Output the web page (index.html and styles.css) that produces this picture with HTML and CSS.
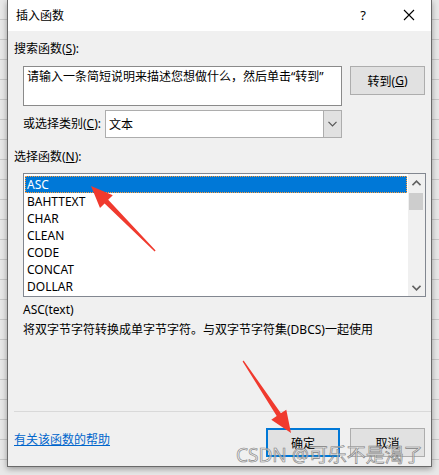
FILE: index.html
```html
<!DOCTYPE html>
<html lang="zh-CN">
<head>
<meta charset="utf-8">
<link rel="stylesheet" href="styles.css">
</head>
<body>
<div class="screen">
  <div class="dialog">
    <div class="titlebar">
      <span class="title">插入函数</span>
      <span class="help">?</span>
      <svg class="close" width="12" height="12" viewBox="0 0 12 12"><path d="M1 1 L11 11 M11 1 L1 11" stroke="#000" stroke-width="1.1" fill="none"/></svg>
    </div>
    <div class="body">
      <div class="label">搜索函数(<u>S</u>):</div>
      <div class="search-row">
        <div class="textarea">请输入一条简短说明来描述您想做什么，然后单击“转到”</div>
        <div class="btn go">转到(<u>G</u>)</div>
      </div>
      <div class="cat-row">
        <span class="cat-label">或选择类别(<u>C</u>):</span>
        <div class="select">
          <span class="sel-text">文本</span>
          <span class="dd"><svg width="9" height="6" viewBox="0 0 9 6"><path d="M0.5 0.8 L4.5 4.8 L8.5 0.8" stroke="#555" stroke-width="1.2" fill="none"/></svg></span>
        </div>
      </div>
      <div class="label label2">选择函数(<u>N</u>):</div>
      <div class="list">
        <div class="items">
          <div class="item selected">ASC</div>
          <div class="item">BAHTTEXT</div>
          <div class="item">CHAR</div>
          <div class="item">CLEAN</div>
          <div class="item">CODE</div>
          <div class="item">CONCAT</div>
          <div class="item">DOLLAR</div>
        </div>
        <div class="scrollbar">
          <div class="sb-btn"><svg width="9" height="6" viewBox="0 0 9 6"><path d="M0.5 5.2 L4.5 1.2 L8.5 5.2" stroke="#606060" stroke-width="1.6" fill="none"/></svg></div>
          <div class="thumb"></div>
          <div class="sb-space"></div>
          <div class="sb-btn"><svg width="9" height="6" viewBox="0 0 9 6"><path d="M0.5 0.8 L4.5 4.8 L8.5 0.8" stroke="#606060" stroke-width="1.6" fill="none"/></svg></div>
        </div>
      </div>
      <div class="sig">ASC(text)</div>
      <div class="desc">将双字节字符转换成单字节字符。与双字节字符集(DBCS)一起使用</div>
      <div class="sep"></div>
      <div class="footer">
        <a class="help-link">有关该函数的帮助</a>
        <div class="btns">
          <div class="btn ok">确定</div>
          <div class="btn cancel">取消</div>
        </div>
      </div>
    </div>
  </div>
  <svg class="arrows" width="439" height="475" viewBox="0 0 439 475">
    <polygon fill="#f03a2e" points="91,186 112.8,195.3 108.2,199.8 155.6,250.6 154.6,251.6 104.6,203.4 100,207.9"/>
    <polygon fill="#f03a2e" points="291,433 286.3,409.7 280.9,413.3 243.6,360.6 242.6,361.4 276.7,416.1 271.3,419.7"/>
  </svg>
  <div class="watermark">CSDN @可乐不是渴了</div>
</div>
</body>
</html>
```
FILE: styles.css
```css
* { box-sizing: border-box; }
html, body { margin: 0; padding: 0; }
body {
  font-family: "Noto Sans", "Noto Sans CJK SC", sans-serif;
  font-size: 12px;
  color: #000;
}
.screen {
  position: relative;
  width: 439px;
  height: 475px;
  overflow: hidden;
  background-color: #e8e8e8;
  background-image:
    repeating-linear-gradient(to bottom, transparent 0, transparent 19px, #c8c8c8 19px, #c8c8c8 20px);
}
.dialog {
  margin-left: 7px;
  width: 425px;
  height: 467px;
  background: #f0f0f0;
  border-left: 1px solid #6a6a6a;
  border-right: 1px solid #6a6a6a;
  border-bottom: 1px solid #6a6a6a;
  box-shadow: 0 2px 6px rgba(0,0,0,0.35);
  display: flex;
  flex-direction: column;
}
.titlebar {
  height: 31px;
  background: #fff;
  display: flex;
  align-items: center;
  padding-left: 8px;
}
.title { font-size: 12px; margin-top: -1px; }
.help { margin-left: auto; margin-right: 37px; font-size: 13px; margin-top: -1px; }
.close { margin-right: 16px; margin-top: -1px; }
.body {
  padding: 0 6px 0 6px;
  display: flex;
  flex-direction: column;
}
.label { line-height: 16px; margin-top: 10px; }
.label2 { margin-top: 11px; }
.search-row {
  display: flex;
  align-items: flex-start;
  margin-top: 9px;
  margin-left: 9px;
}
.textarea {
  width: 319px;
  height: 40px;
  flex-shrink: 0;
  background: #fff;
  border: 1px solid #8a8a8a;
  padding: 2px 3px;
  line-height: 16px;
}
.btn {
  background: #e1e1e1;
  border: 1px solid #adadad;
  display: flex;
  align-items: center;
  justify-content: center;
  height: 29px;
  flex-shrink: 0;
}
.go { width: 75px; margin-left: 8px; }
.cat-row {
  display: flex;
  align-items: center;
  margin-top: 4px;
  margin-left: 9px;
}
.cat-label { width: 82px; min-width: 0; flex-shrink: 0; line-height: 16px; white-space: nowrap; }
.select {
  width: 237px;
  flex-shrink: 0;
  height: 28px;
  background: #fff;
  border: 1px solid #adadad;
  display: flex;
  align-items: stretch;
}
.sel-text { flex: 1; padding-left: 3px; display: flex; align-items: center; }
.dd {
  width: 18px;
  background: #e1e1e1;
  border-left: 1px solid #adadad;
  display: flex;
  align-items: center;
  justify-content: center;
}
.list {
  margin-top: 8px;
  margin-left: 9px;
  width: 403px;
  height: 124px;
  background: #fff;
  border: 1px solid #828790;
  display: flex;
}
.items { flex: 1; padding: 2px 1px 0 1px; }
.item { height: 17px; line-height: 17px; padding-left: 2px; }
.item.selected {
  background: #0078d7;
  color: #fff;
  outline: 1px dotted #ff9d3a;
  outline-offset: -1px;
}
.scrollbar {
  width: 17px;
  background: #f0f0f0;
  display: flex;
  flex-direction: column;
}
.sb-btn { height: 17px; display: flex; align-items: center; justify-content: center; }
.thumb { height: 17px; background: #cdcdcd; margin: 2px 2px 0 1px; }
.sb-space { flex: 1; }
.sig { margin-top: 5px; margin-left: 9px; line-height: 16px; }
.desc { margin-top: 4px; margin-left: 9px; line-height: 16px; }
.sep { margin-top: 73px; height: 1px; background: #d9d9d9; margin-right: -6px; }
.footer {
  display: flex;
  align-items: flex-start;
  margin-top: 16px;
}
.help-link {
  color: #0066cc;
  text-decoration: underline;
  line-height: 16px;
  margin-top: 4px;
}
.btns { margin-left: auto; display: flex; gap: 10px; }
.ok { width: 74px; border: 2px solid #0078d7; }
.cancel { width: 75px; }
.arrows { position: absolute; left: 0; top: 0; pointer-events: none; }
.watermark {
  position: absolute;
  left: 236px;
  top: 443px;
  font-size: 19px;
  line-height: 24px;
  color: rgba(235,235,235,0.6);
  -webkit-text-stroke: 0.6px #808080;
  white-space: nowrap;
}
```
